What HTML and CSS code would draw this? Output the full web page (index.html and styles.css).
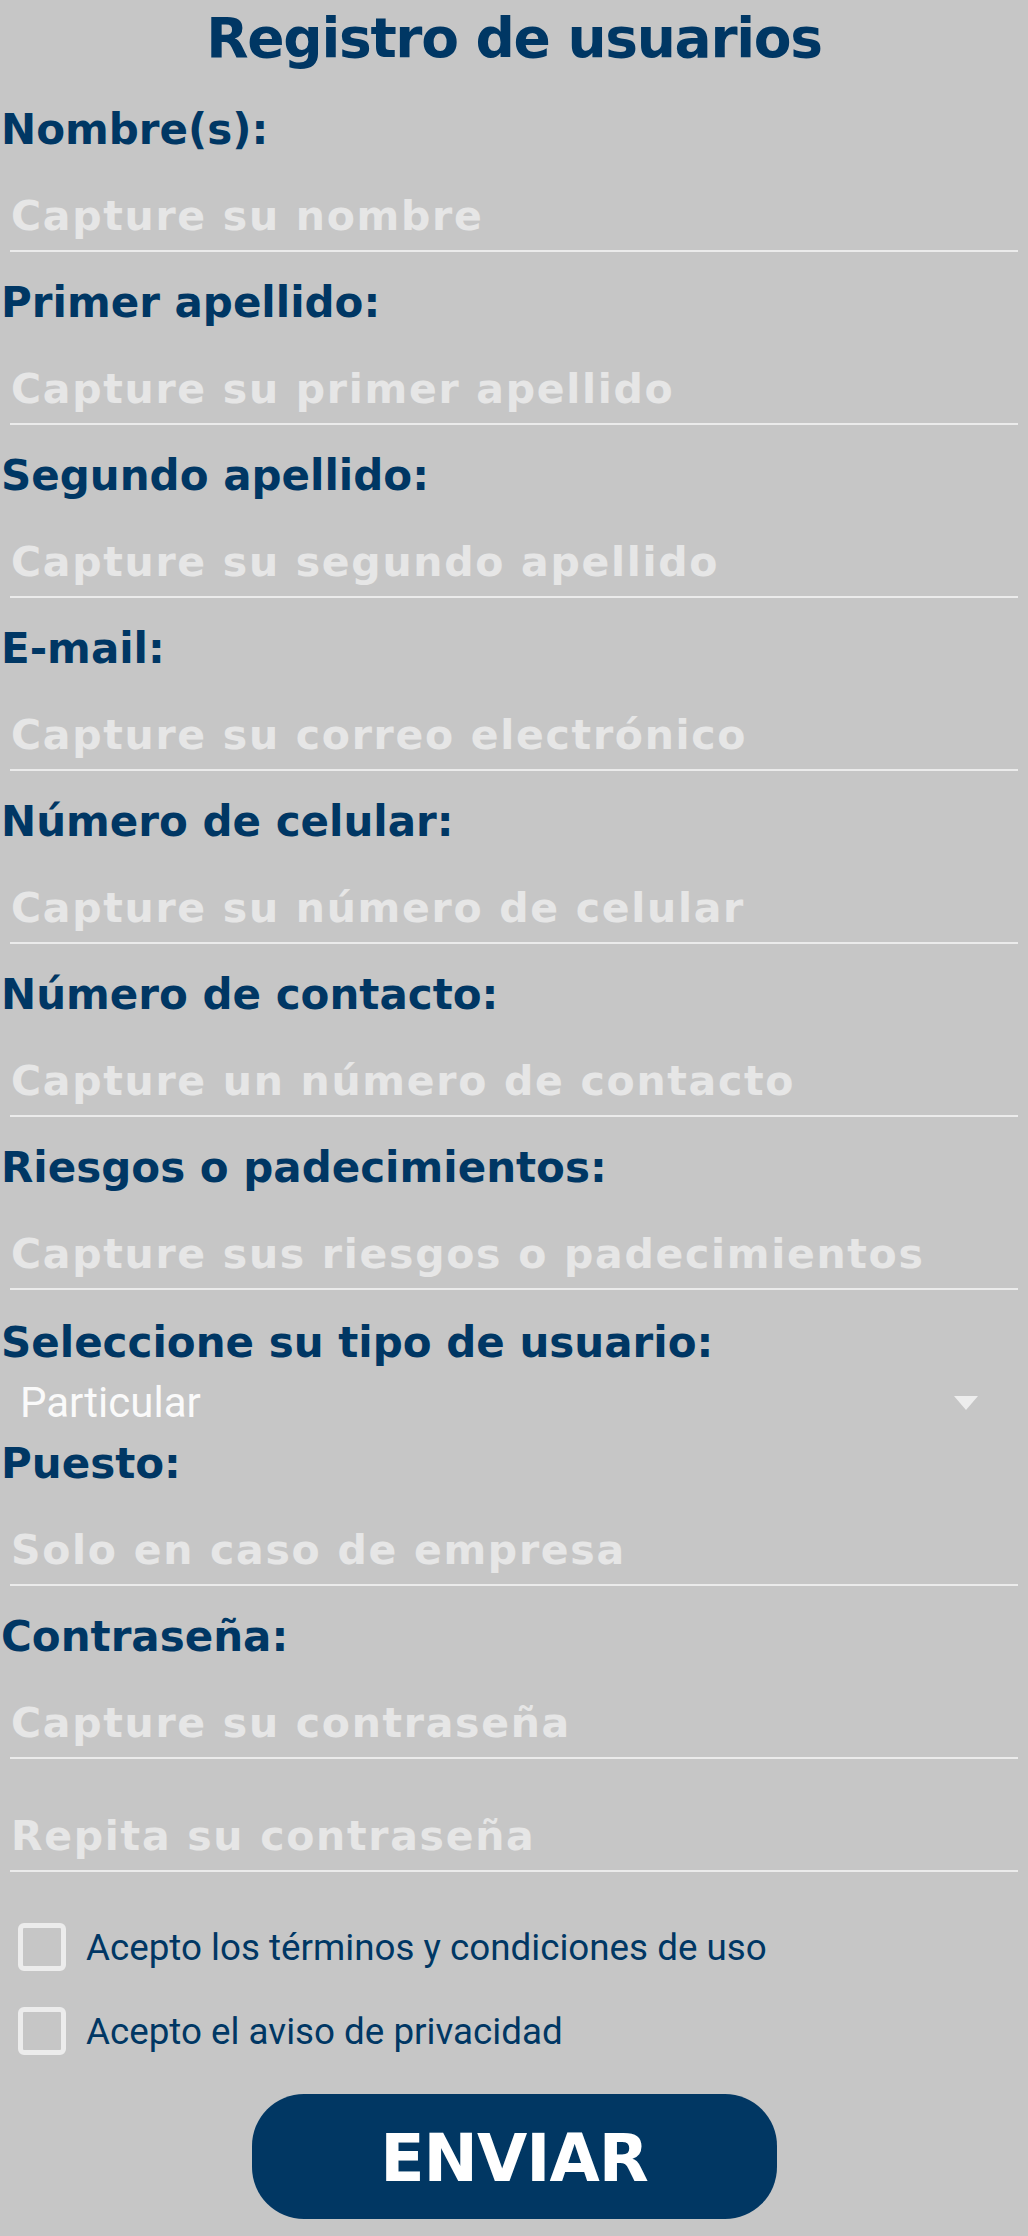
FILE: index.html
```html
<!DOCTYPE html>
<html lang="es">
<head>
<meta charset="utf-8">
<title>Registro de usuarios</title>
<link rel="stylesheet" href="styles.css">
</head>
<body>
<form class="form">
  <h1 class="title">Registro de usuarios</h1>

  <div class="field">
    <label class="label">Nombre(s):</label>
    <input class="input" type="text" placeholder="Capture su nombre">
  </div>
  <div class="field">
    <label class="label">Primer apellido:</label>
    <input class="input" type="text" placeholder="Capture su primer apellido">
  </div>
  <div class="field">
    <label class="label">Segundo apellido:</label>
    <input class="input" type="text" placeholder="Capture su segundo apellido">
  </div>
  <div class="field">
    <label class="label">E-mail:</label>
    <input class="input" type="email" placeholder="Capture su correo electrónico">
  </div>
  <div class="field">
    <label class="label">Número de celular:</label>
    <input class="input" type="tel" placeholder="Capture su número de celular">
  </div>
  <div class="field">
    <label class="label">Número de contacto:</label>
    <input class="input" type="tel" placeholder="Capture un número de contacto">
  </div>
  <div class="field">
    <label class="label">Riesgos o padecimientos:</label>
    <input class="input" type="text" placeholder="Capture sus riesgos o padecimientos">
  </div>

  <div class="field">
    <label class="label label-select">Seleccione su tipo de usuario:</label>
    <div class="select">
      <span class="select-value">Particular</span>
      <span class="select-arrow"></span>
    </div>
  </div>

  <div class="field">
    <label class="label label-after-select">Puesto:</label>
    <input class="input" type="text" placeholder="Solo en caso de empresa">
  </div>
  <div class="field">
    <label class="label">Contraseña:</label>
    <input class="input" type="password" placeholder="Capture su contraseña">
    <input class="input input-repeat" type="password" placeholder="Repita su contraseña">
  </div>

  <div class="checks">
    <label class="check">
      <input class="cb" type="checkbox">
      <span class="check-text">Acepto los términos y condiciones de uso</span>
    </label>
    <label class="check">
      <input class="cb" type="checkbox">
      <span class="check-text">Acepto el aviso de privacidad</span>
    </label>
  </div>

  <button class="btn" type="button">ENVIAR</button>
</form>
</body>
</html>
```
FILE: styles.css
```css
html, body {
  margin: 0;
  padding: 0;
  background: #c6c6c6;
}

body {
  font-family: "DejaVu Sans", sans-serif;
  width: 1028px;
  min-height: 2236px;
}

.form {
  display: flex;
  flex-direction: column;
  width: 1028px;
}

.title {
  margin: 6px 0 9px;
  height: 64px;
  font-size: 55px;
  line-height: 64px;
  font-weight: 700;
  letter-spacing: -1.3px;
  color: #003764;
  text-align: center;
}

.field {
  display: flex;
  flex-direction: column;
}

.label {
  display: block;
  margin: 26px 0 0;
  padding-left: 1px;
  height: 50px;
  font-size: 42px;
  line-height: 50px;
  font-weight: 700;
  color: #003764;
  white-space: nowrap;
}

.input {
  display: block;
  box-sizing: content-box;
  margin: 36px 0 0 10px;
  width: 1007px;
  height: 50px;
  padding: 0 0 9px 1px;
  border: 0;
  border-bottom: 2px solid #ebebeb;
  border-radius: 0;
  background: transparent;
  font-family: "DejaVu Sans", sans-serif;
  font-size: 41px;
  font-weight: 700;
  line-height: 50px;
  letter-spacing: 1.7px;
  color: #003764;
  outline: none;
}

.input::placeholder {
  color: #e6e6e6;
  opacity: 1;
}

.input-repeat {
  margin-top: 52px;
}

.label-select {
  margin-top: 28px;
}

.select {
  display: flex;
  align-items: center;
  justify-content: space-between;
  margin-top: 11px;
  height: 48px;
  padding: 0 50px 0 20px;
  font-family: Roboto, "Liberation Sans", sans-serif;
  font-size: 42px;
  line-height: 48px;
  color: #fafafa;
}

.select-arrow {
  width: 0;
  height: 0;
  border-left: 12.5px solid transparent;
  border-right: 12.5px solid transparent;
  border-top: 14px solid #ededed;
}

.label-after-select {
  margin-top: 12px;
}

.checks {
  display: flex;
  flex-direction: column;
  gap: 36px;
  margin-top: 51px;
}

.check {
  display: flex;
  align-items: flex-start;
  padding-left: 18px;
  height: 48px;
}

.cb {
  appearance: none;
  -webkit-appearance: none;
  box-sizing: border-box;
  margin: 0;
  width: 48px;
  height: 48px;
  border: 5px solid #ececec;
  border-radius: 6px;
  background: transparent;
  flex: none;
}

.check-text {
  margin-left: 20px;
  padding-top: 1px;
  font-family: Roboto, "Liberation Sans", sans-serif;
  font-size: 36.75px;
  line-height: 48px;
  color: #003764;
  white-space: nowrap;
}

.btn {
  align-self: center;
  display: flex;
  align-items: center;
  justify-content: center;
  box-sizing: border-box;
  margin-top: 39px;
  width: 525px;
  height: 125px;
  padding: 4px 0 0;
  border: 0;
  border-radius: 52px;
  background: #013763;
  color: #ffffff;
  font-family: "DejaVu Sans", sans-serif;
  font-size: 65px;
  font-weight: 700;
  letter-spacing: -1px;
}
```
